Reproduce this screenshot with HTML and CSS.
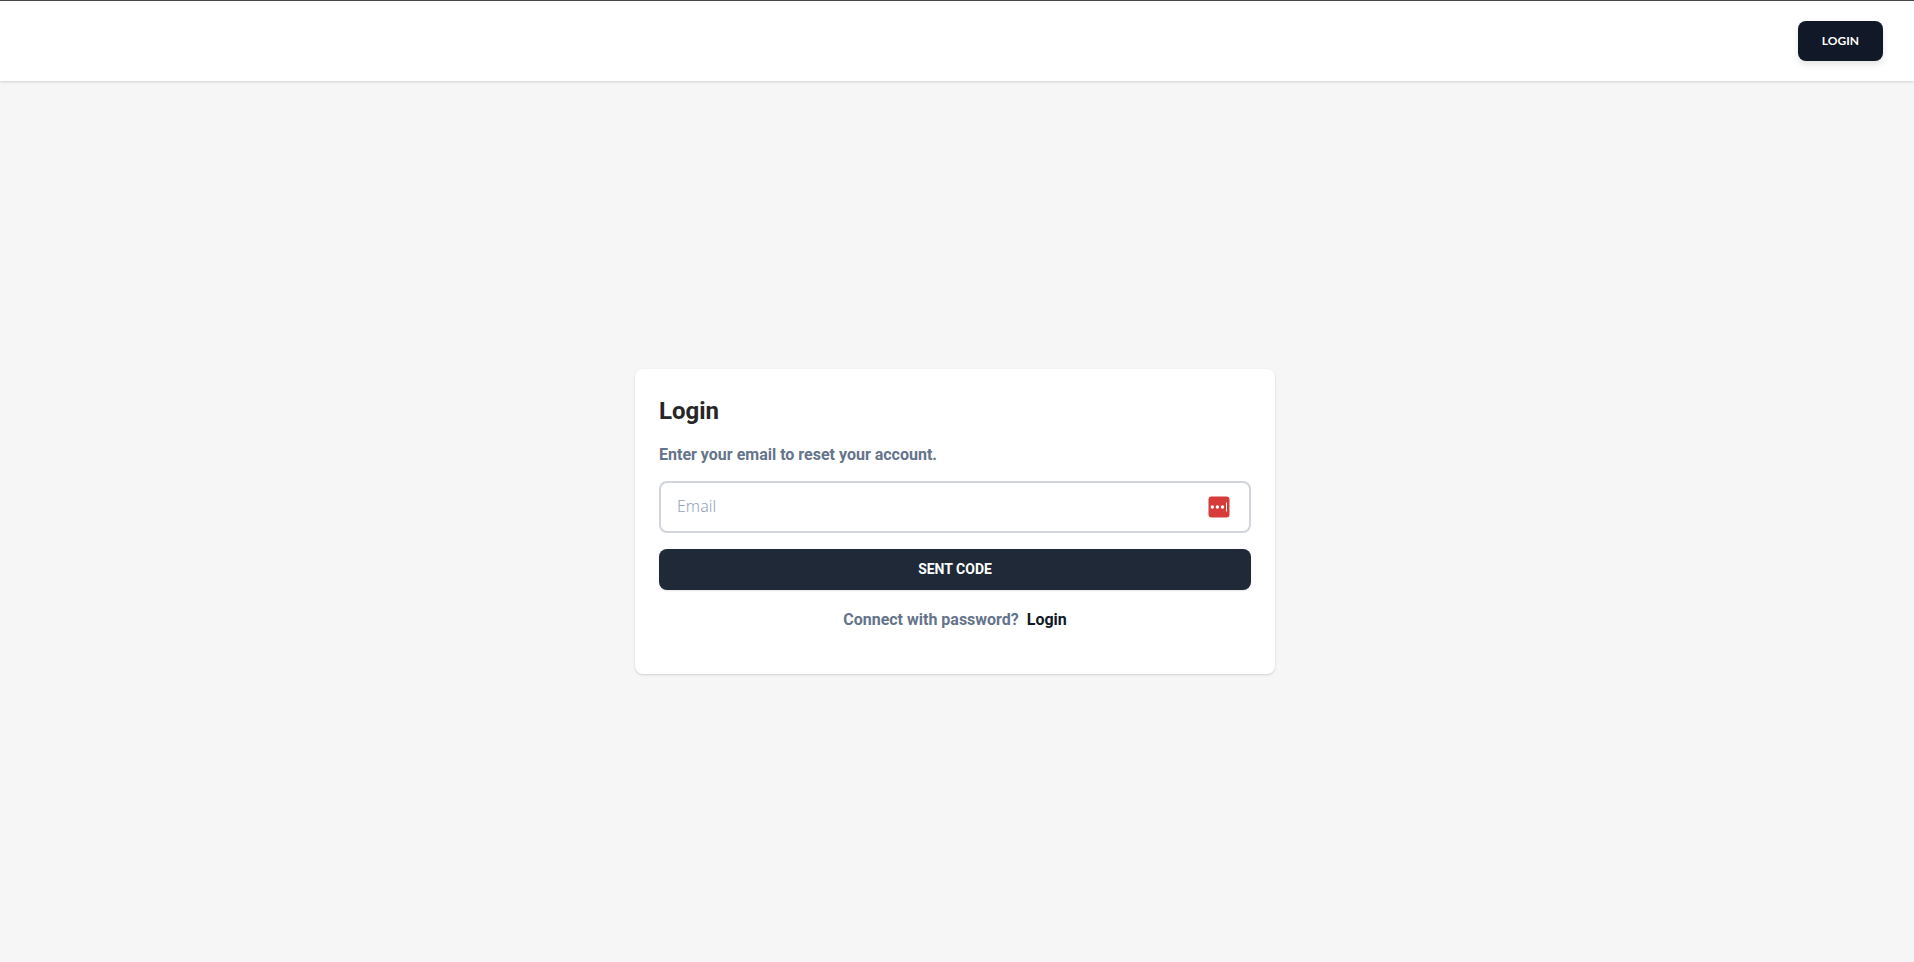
FILE: index.html
```html
<!DOCTYPE html>
<html lang="en">
<head>
  <meta charset="utf-8">
  <meta name="viewport" content="width=device-width, initial-scale=1">
  <title>Login</title>
  <link rel="stylesheet" href="styles.css">
</head>
<body>
  <header class="topbar">
    <button class="topbar-login" type="button">LOGIN</button>
  </header>
  <main class="content">
    <form class="card">
      <h1 class="card-title">Login</h1>
      <label class="card-hint" for="email">Enter your email to reset your account.</label>
      <div class="field">
        <input class="field-input" id="email" type="email" placeholder="Email">
        <svg class="field-icon" viewBox="0 0 22 22" aria-hidden="true">
          <rect x="0.5" y="0.5" width="21" height="21" rx="3" fill="#d63c3a"/>
          <g fill="#fff">
            <circle cx="4.3" cy="11" r="1.7"/>
            <circle cx="9.4" cy="11" r="1.7"/>
            <circle cx="14.5" cy="11" r="1.7"/>
            <rect x="18" y="6.5" width="1" height="9"/>
          </g>
        </svg>
      </div>
      <button class="submit" type="submit">SENT CODE</button>
      <p class="switch">Connect with password? <a class="switch-link" href="#">Login</a></p>
    </form>
  </main>
</body>
</html>
```
FILE: styles.css
```css
* {
  box-sizing: border-box;
}

body {
  display: flex;
  flex-direction: column;
  min-height: 100vh;
  margin: 0;
  border-top: 1px solid #45464a;
  background: #f6f6f6;
  font-family: Roboto, sans-serif;
}

.topbar {
  display: flex;
  justify-content: flex-end;
  padding: 20px 31px;
  background: #fff;
  box-shadow: 0 1px 3px rgba(0, 0, 0, 0.1), 0 1px 2px rgba(0, 0, 0, 0.06);
}

.topbar-login {
  height: 40px;
  padding: 0 24px;
  border: 0;
  border-radius: 8px;
  background: #111827;
  box-shadow: 0 4px 6px rgba(0, 0, 0, 0.1);
  color: #fff;
  font: 700 12px/16px Lato, sans-serif;
}

.content {
  display: flex;
  flex: 1;
  align-items: center;
  justify-content: center;
  padding-right: 4px;
}

.card {
  display: flex;
  flex-direction: column;
  gap: 16px;
  width: 100%;
  max-width: 640px;
  padding: 24px 24px 40px;
  border-radius: 8px;
  background: #fff;
  box-shadow: 0 1px 3px rgba(0, 0, 0, 0.1), 0 1px 2px rgba(0, 0, 0, 0.06);
}

.card-title {
  margin: 0;
  color: #262626;
  font-size: 24px;
  font-weight: 700;
  line-height: 36px;
}

.card-hint {
  color: #64748b;
  font-size: 16px;
  font-weight: 700;
  line-height: 20px;
}

.field {
  display: flex;
  align-items: center;
  height: 52px;
  padding: 0 19px 0 16px;
  border: 2px solid #d1d5db;
  border-radius: 8px;
}

.field-input {
  flex: 1;
  min-width: 0;
  padding: 0 0 2px;
  border: 0;
  outline: 0;
  background: transparent;
  color: #1f2937;
  font: 300 16px/24px "Noto Sans", sans-serif;
}

.field-input::placeholder {
  color: #94a3b8;
}

.field-icon {
  width: 22px;
  height: 22px;
}

.submit {
  height: 41px;
  padding: 0 0 2px;
  border: 0;
  border-radius: 8px;
  background: #1f2937;
  box-shadow: 0 1px 2px rgba(0, 0, 0, 0.1);
  color: #fff;
  font: 700 14px/20px Roboto, sans-serif;
}

.switch {
  margin: 0;
  color: #64748b;
  font-size: 16px;
  font-weight: 700;
  line-height: 28px;
  text-align: center;
}

.switch-link {
  margin-left: 4px;
  color: #111827;
  text-decoration: none;
}
```
